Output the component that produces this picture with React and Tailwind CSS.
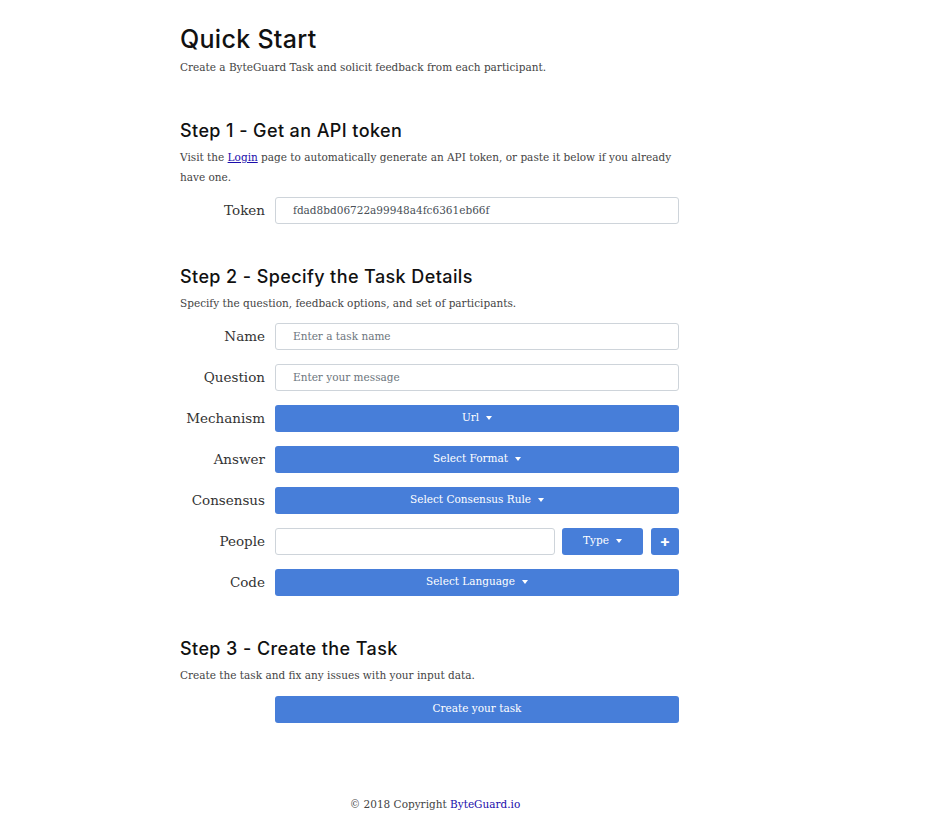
const serif = { fontFamily: '"DejaVu Serif", "Liberation Serif", serif' };
const sans = { fontFamily: 'Inter, "Noto Sans", sans-serif' };

const Caret = () => (
  <span className="inline-block ml-[7px] align-middle border-x-[3.5px] border-x-transparent border-t-[4px] border-t-white" />
);

const Row = ({ label, children }) => (
  <div className="flex items-center">
    <label className="w-[85px] text-right text-[13.5px] text-[#333] mr-[10px] shrink-0">
      {label}
    </label>
    <div className="flex-1 flex gap-[7px]">{children}</div>
  </div>
);

const TextInput = ({ placeholder, value, className = '' }) => (
  <input
    readOnly
    placeholder={placeholder}
    value={value}
    className={`h-[27px] border border-[#ced4da] rounded-[3px] px-[17px] text-[10.5px] text-[#495057] placeholder:text-[#6c757d] bg-white ${className}`}
    style={serif}
  />
);

const Dropdown = ({ text, className = 'flex-1' }) => (
  <button
    className={`h-[27px] rounded-[3px] bg-[#477ed9] text-white text-[10.5px] flex items-center justify-center ${className}`}
  >
    {text}
    <Caret />
  </button>
);

const Heading = ({ children, className = '' }) => (
  <h2
    className={`text-[18px] font-medium tracking-[0.4px] text-[#111] ${className}`}
    style={sans}
  >
    {children}
  </h2>
);

const App = () => {
  return (
    <div className="min-h-screen bg-white" style={serif}>
      <div className="w-[499px] ml-[180px] pt-[22px]">
        <h1 className="text-[25px] font-medium tracking-[0.3px] text-[#111] leading-[34px]" style={sans}>
          Quick Start
        </h1>
        <p className="text-[10.5px] text-[#444] mt-[4px]">
          Create a ByteGuard Task and solicit feedback from each participant.
        </p>

        {/* Step 1 */}
        <Heading className="mt-[41px]">Step 1 - Get an API token</Heading>
        <p className="text-[10.5px] text-[#444] leading-[20px] mt-[3px]">
          Visit the{' '}
          <a href="#" className="underline text-[#1a0dab]">
            Login
          </a>{' '}
          page to automatically generate an API token, or paste it below if you
          already have one.
        </p>
        <div className="mt-[10px]">
          <Row label="Token">
            <TextInput value="fdad8bd06722a99948a4fc6361eb66f" className="flex-1" />
          </Row>
        </div>

        {/* Step 2 */}
        <Heading className="mt-[39px]">Step 2 - Specify the Task Details</Heading>
        <p className="text-[10.5px] text-[#444] leading-[20px] mt-[3px]">
          Specify the question, feedback options, and set of participants.
        </p>
        <div className="mt-[10px] flex flex-col gap-[14px]">
          <Row label="Name">
            <TextInput placeholder="Enter a task name" className="flex-1" />
          </Row>
          <Row label="Question">
            <TextInput placeholder="Enter your message" className="flex-1" />
          </Row>
          <Row label="Mechanism">
            <Dropdown text="Url" />
          </Row>
          <Row label="Answer">
            <Dropdown text="Select Format" />
          </Row>
          <Row label="Consensus">
            <Dropdown text="Select Consensus Rule" />
          </Row>
          <Row label="People">
            <TextInput className="w-[280px]" />
            <Dropdown text="Type" className="w-[81px]" />
            <button className="h-[27px] w-[28px] ml-[1px] rounded-[3px] bg-[#477ed9] text-white text-[16px] font-bold flex items-center justify-center" style={sans}>
              +
            </button>
          </Row>
          <Row label="Code">
            <Dropdown text="Select Language" />
          </Row>
        </div>

        {/* Step 3 */}
        <Heading className="mt-[39px]">Step 3 - Create the Task</Heading>
        <p className="text-[10.5px] text-[#444] leading-[20px] mt-[3px]">
          Create the task and fix any issues with your input data.
        </p>
        <div className="mt-[11px] flex">
          <div className="w-[95px] shrink-0" />
          <button className="flex-1 h-[27px] rounded-[3px] bg-[#477ed9] text-white text-[10.5px]">
            Create your task
          </button>
        </div>

        <footer className="mt-[74px] pb-[24px] pl-[11px] text-center text-[10.5px] text-[#444]">
          © 2018 Copyright <span className="text-[#1a0dab]">ByteGuard.io</span>
        </footer>
      </div>
    </div>
  );
};

export default App;
